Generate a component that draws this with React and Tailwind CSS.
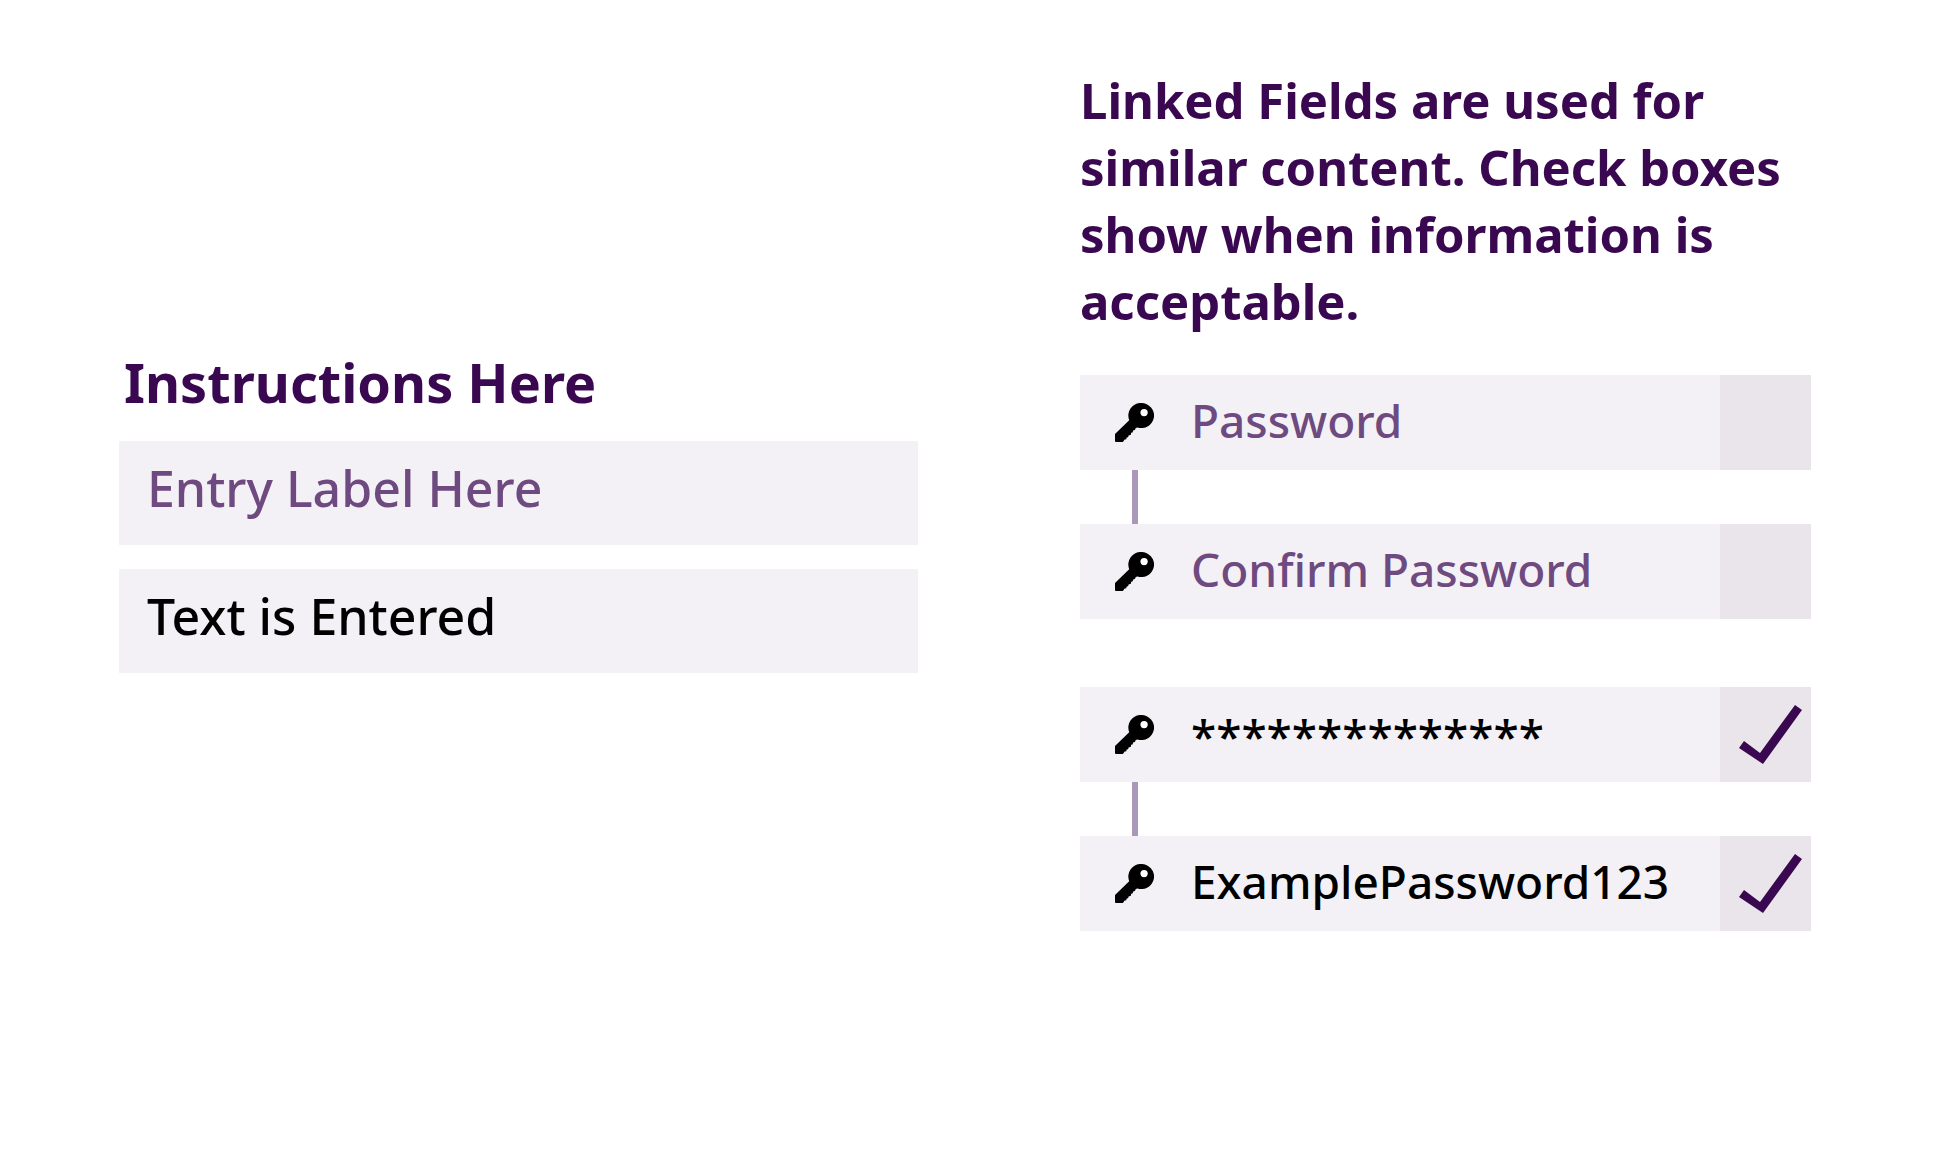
function KeyIcon() {
  return (
    <svg viewBox="0 0 118 118" className="size-[39px] shrink-0" aria-hidden="true">
      <path
        fill="#000"
        d="M80 0a38 38 0 1 1-12 74L63 76L60 82L55 83L53 89L49 90L48 96L41 98L40 103L35 105L34 110L28 111L26 116L23 118H2L0 116V94L43 52A38 38 0 0 1 80 0Z"
      />
      <circle cx="88" cy="29" r="11" fill="#fff" />
    </svg>
  );
}

function CheckMark() {
  return (
    <svg
      viewBox="0 0 63 59"
      className="pointer-events-none col-start-1 row-start-1 ml-2.5 hidden h-[59px] w-[63px] peer-checked:block"
      aria-hidden="true"
    >
      <path fill="#3a0850" d="M5 36 21 48 56 0 63 5 24 59 0 43Z" />
    </svg>
  );
}

function Entry({ label, value }) {
  return (
    <input
      type="text"
      aria-label={label}
      placeholder={value ? undefined : label}
      defaultValue={value}
      className="h-[104px] w-full bg-[#f3f1f6] px-7 pb-2.5 text-[50px] font-medium text-black outline-none placeholder:text-[#6f4a80] placeholder:opacity-100"
    />
  );
}

function LinkedField({ label, value, masked, accepted }) {
  return (
    <div className="flex h-[95px] items-stretch bg-[#f3f1f6]">
      <label className="flex min-w-0 flex-1 items-center gap-[37px] pl-[35px]">
        <KeyIcon />
        <input
          type="text"
          aria-label={label}
          placeholder={value ? undefined : label}
          defaultValue={value}
          className={
            "h-full w-full min-w-0 bg-transparent text-[46px] font-medium text-black outline-none placeholder:text-[#6f4a80] placeholder:opacity-100 " +
            (masked ? "pb-0" : "pb-1.5")
          }
        />
      </label>
      <div className="grid w-[91px] shrink-0 place-items-center bg-[#eae5eb]">
        <input
          type="checkbox"
          aria-label={label + " accepted"}
          defaultChecked={accepted}
          className="peer col-start-1 row-start-1 size-full appearance-none"
        />
        <CheckMark />
      </div>
    </div>
  );
}

function LinkedPair({ children }) {
  const [first, second] = children;
  return (
    <div className="flex flex-col">
      {first}
      <div className="ml-[52px] h-[54px] w-1.5 bg-[#ab98b8]" />
      {second}
    </div>
  );
}

export default function App() {
  return (
    <main className="grid min-h-screen grid-cols-[799fr_731fr] items-start gap-x-[162px] bg-white pt-[67px] pr-[143px] pb-16 pl-[119px] font-['Noto_Sans',sans-serif]">
      <section className="pt-[279px]">
        <h2 className="mb-[23px] pl-[5px] text-[54px] leading-[72px] font-bold text-[#3a0850]">
          Instructions Here
        </h2>
        <div className="flex flex-col gap-6">
          <Entry label="Entry Label Here" />
          <Entry label="Entered text" value="Text is Entered" />
        </div>
      </section>

      <section>
        <h2 className="mb-10 text-[49px] leading-[67px] font-bold text-[#3a0850]">
          Linked Fields are used for similar content. Check boxes show when information is acceptable.
        </h2>
        <div className="flex flex-col gap-[68px]">
          <LinkedPair>
            <LinkedField label="Password" />
            <LinkedField label="Confirm Password" />
          </LinkedPair>
          <LinkedPair>
            <LinkedField label="Password" value="**************" masked accepted />
            <LinkedField label="Confirm Password" value="ExamplePassword123" accepted />
          </LinkedPair>
        </div>
      </section>
    </main>
  );
}
